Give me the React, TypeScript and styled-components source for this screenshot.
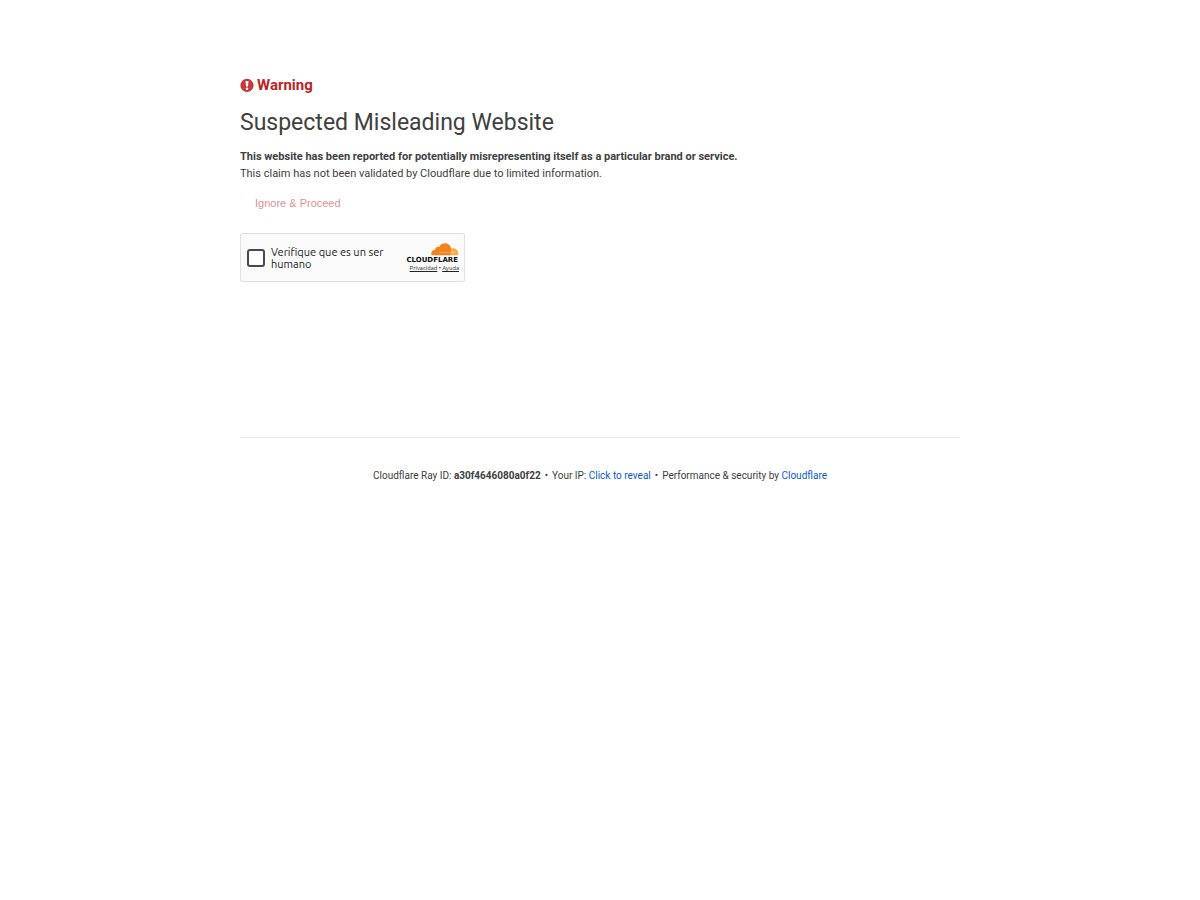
import React from "react";
import styled, { createGlobalStyle } from "styled-components";

const GlobalStyle = createGlobalStyle`
  * { box-sizing: border-box; }
  body {
    margin: 0;
    background: #fff;
    color: #404040;
    font-family: Roboto, "Liberation Sans", sans-serif;
    font-size: 11px;
    line-height: 17px;
  }
`;

const Page = styled.div`
  width: 60%;
  min-width: 320px;
  margin: 0 auto;
  padding-top: 74px;
`;

const Warning = styled.div`
  display: flex;
  align-items: center;
  gap: 3px;
  color: #bd2426;
  font-size: 15px;
  font-weight: 700;
  line-height: 22px;
  svg { flex: none; }
`;

const Title = styled.h1`
  margin: 12px 0 10px;
  font-size: 23px;
  font-weight: 400;
  line-height: 30px;
`;

const Text = styled.p`
  margin: 0;
`;

const ProceedButton = styled.button`
  display: block;
  margin: 8px 0 16px;
  padding: 5px 15px;
  border: 0;
  background: transparent;
  color: #de9193;
  font-family: "Liberation Sans", Arial, sans-serif;
  font-size: 11px;
  line-height: 17px;
`;

const Widget = styled.div`
  display: flex;
  align-items: center;
  justify-content: space-between;
  width: 225px;
  height: 49px;
  padding: 0 5px 0 6px;
  border: 1px solid #e0e0e0;
  border-radius: 2px;
  background: #fafafa;
  color: #232323;
`;

const CheckLabel = styled.label`
  display: flex;
  align-items: center;
  gap: 6px;
  width: 144px;
  font-family: Ubuntu, "Open Sans", sans-serif;
  font-size: 11px;
  line-height: 12px;
`;

const Checkbox = styled.input`
  appearance: none;
  flex: none;
  width: 18px;
  height: 18px;
  margin: 0;
  border: 2px solid #4a4a4a;
  border-radius: 3px;
  background: #fff;
`;

const Brand = styled.div`
  display: flex;
  flex-direction: column;
  align-items: flex-end;
  svg { display: block; }
`;

const BrandLinks = styled.div`
  font-family: Ubuntu, "Noto Sans", sans-serif;
  font-size: 6px;
  line-height: 8px;
  white-space: pre;
  a { color: #232323; }
`;

const Footer = styled.footer`
  margin-top: 155px;
  padding: 30px 0;
  border-top: 1px solid #ebebeb;
  text-align: center;
  font-size: 10px;
  line-height: 16px;
`;

const Separator = styled.span`
  margin: 0 4px;
`;

const FooterLink = styled.a`
  color: #0a5acb;
  text-decoration: none;
`;

const RevealButton = styled.button`
  padding: 0;
  border: 0;
  background: transparent;
  color: #0a5acb;
  font: inherit;
`;

const WarningIcon = () => (
  <svg width="14" height="14" viewBox="0 0 14 14" aria-hidden="true">
    <circle cx="7" cy="7.4" r="6.6" fill="#c43a3b" />
    <path d="M5.5 2.9h3L8 8.4H6z" fill="#fff" />
    <circle cx="7" cy="10.7" r="1.3" fill="#fff" />
  </svg>
);

const CloudflareLogo = () => (
  <svg width="57" height="21" viewBox="0 0 57 21" role="img" aria-label="Cloudflare">
    <path
      d="M49.6 5.1 49 4.9C48.2 2.1 45.8.3 43 .3c-2.7 0-4.9 1.5-5.9 3.8-.7-.4-1.5-.5-2.2-.2-1 .4-1.6 1.3-1.6 2.5-2.4.1-4 2-4 4.1 0 .6.1 1.1.2 1.7h18.9l1-3z"
      fill="#f4811f"
    />
    <path
      d="M51 5.1c-.5 0-.8.2-.9.6l-.7 2c-.3.9.1 1.2.9 1.3l2.7.2c.2 0 .2.2 0 .3l-2.8.3c-1.1.1-1.9.8-2.2 1.7l-.1.7h7.9c.2-.5.3-1 .3-1.6 0-3.1-2.3-5.4-5.1-5.5z"
      fill="#faad3f"
    />
    <path d="M37 9.4h10.4c.8 0 1.1-.3 1.4-.9" fill="none" stroke="#fbc28e" strokeWidth=".6" />
    <text x="56" y="19" textAnchor="end" fill="#111" fontFamily="DejaVu Sans, sans-serif" fontWeight="700" fontSize="7">
      CLOUDFLARE
    </text>
  </svg>
);

export default function App() {
  return (
    <>
      <GlobalStyle />
      <Page>
        <main>
          <Warning>
            <WarningIcon />
            Warning
          </Warning>
          <Title>Suspected Misleading Website</Title>
          <Text>
            <strong>
              This website has been reported for potentially misrepresenting itself as a particular brand or service.
            </strong>
          </Text>
          <Text>This claim has not been validated by Cloudflare due to limited information.</Text>
          <ProceedButton type="button">Ignore &amp; Proceed</ProceedButton>
          <Widget>
            <CheckLabel>
              <Checkbox type="checkbox" />
              <span>Verifique que es un ser humano</span>
            </CheckLabel>
            <Brand>
              <CloudflareLogo />
              <BrandLinks>
                <a href="#privacidad">Privacidad</a> • <a href="#ayuda">Ayuda</a>
              </BrandLinks>
            </Brand>
          </Widget>
        </main>
        <Footer>
          Cloudflare Ray ID: <strong>a30f4646080a0f22</strong>
          <Separator>•</Separator>
          Your IP: <RevealButton type="button">Click to reveal</RevealButton>
          <Separator>•</Separator>
          Performance &amp; security by <FooterLink href="#cloudflare">Cloudflare</FooterLink>
        </Footer>
      </Page>
    </>
  );
}
